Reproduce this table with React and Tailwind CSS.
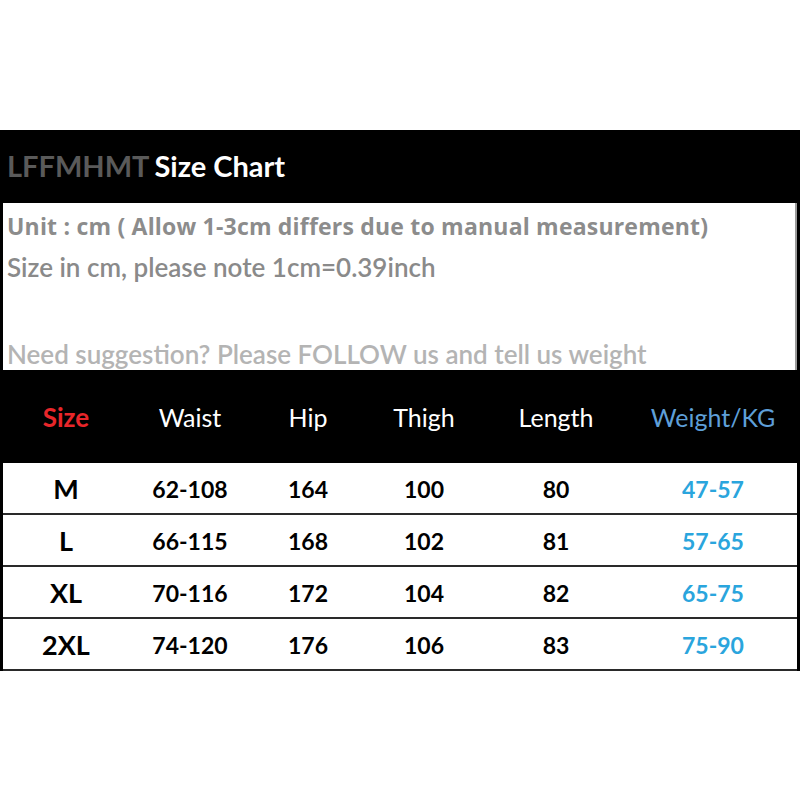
const rows = [
  ['M', '62-108', '164', '100', '80', '47-57'],
  ['L', '66-115', '168', '102', '81', '57-65'],
  ['XL', '70-116', '172', '104', '82', '65-75'],
  ['2XL', '74-120', '176', '106', '83', '75-90'],
];

const cols = 'grid grid-cols-[126px_122px_114px_118px_146px_168px]';

export default function App() {
  return (
    <div className="w-[800px] h-[800px] bg-white flex flex-col font-['Lato',sans-serif]">
      <div className="h-[130px]" />
      <div className="bg-black flex flex-col">
        <div className="h-[73px] flex items-center pl-[7px] pb-[2px] text-[29px] font-bold">
          <span className="text-[#5a5a5a]">LFFMHMT</span>
          <span className="text-white ml-[5px]">Size Chart</span>
        </div>
        <div className="mx-[3px] h-[167px] bg-white border-r-2 border-[#9a9a9a] pl-[4px] flex flex-col">
          <div className="h-[44px] flex items-center pt-[2px] text-[23px] font-bold text-[#8c8c8c] font-['Open_Sans',sans-serif] tracking-[0.2px]">
            Unit : cm ( Allow 1-3cm differs due to manual measurement)
          </div>
          <div className="h-[40px] flex items-center text-[26px] text-[#8a8a8a] font-semibold">
            Size in cm, please note 1cm=0.39inch
          </div>
          <div className="flex-1" />
          <div className="h-[34px] flex items-center pt-[2px] text-[26px] text-[#b4b4b4] font-semibold">
            Need suggestion? Please FOLLOW us and tell us weight
          </div>
        </div>
        <div className={`${cols} h-[93px] items-center px-[3px] pt-[2px] text-[25px] text-white`}>
          <div className="text-center font-bold text-[#e8262a] text-[26px]">Size</div>
          <div className="text-center">Waist</div>
          <div className="text-center">Hip</div>
          <div className="text-center">Thigh</div>
          <div className="text-center">Length</div>
          <div className="text-center text-[#5e9fd8]">Weight/KG</div>
        </div>
      </div>
      <div className="border-x-[3px] border-black">
        {rows.map((r) => (
          <div
            key={r[0]}
            className={`${cols} h-[52px] items-center pt-[2px] border-b-2 border-[#2a2a2a] text-[23px] font-bold text-black`}
          >
            <div className="text-center text-[27px]">{r[0]}</div>
            <div className="text-center">{r[1]}</div>
            <div className="text-center">{r[2]}</div>
            <div className="text-center">{r[3]}</div>
            <div className="text-center">{r[4]}</div>
            <div className="text-center text-[#2aa5dd]">{r[5]}</div>
          </div>
        ))}
      </div>
    </div>
  );
}
